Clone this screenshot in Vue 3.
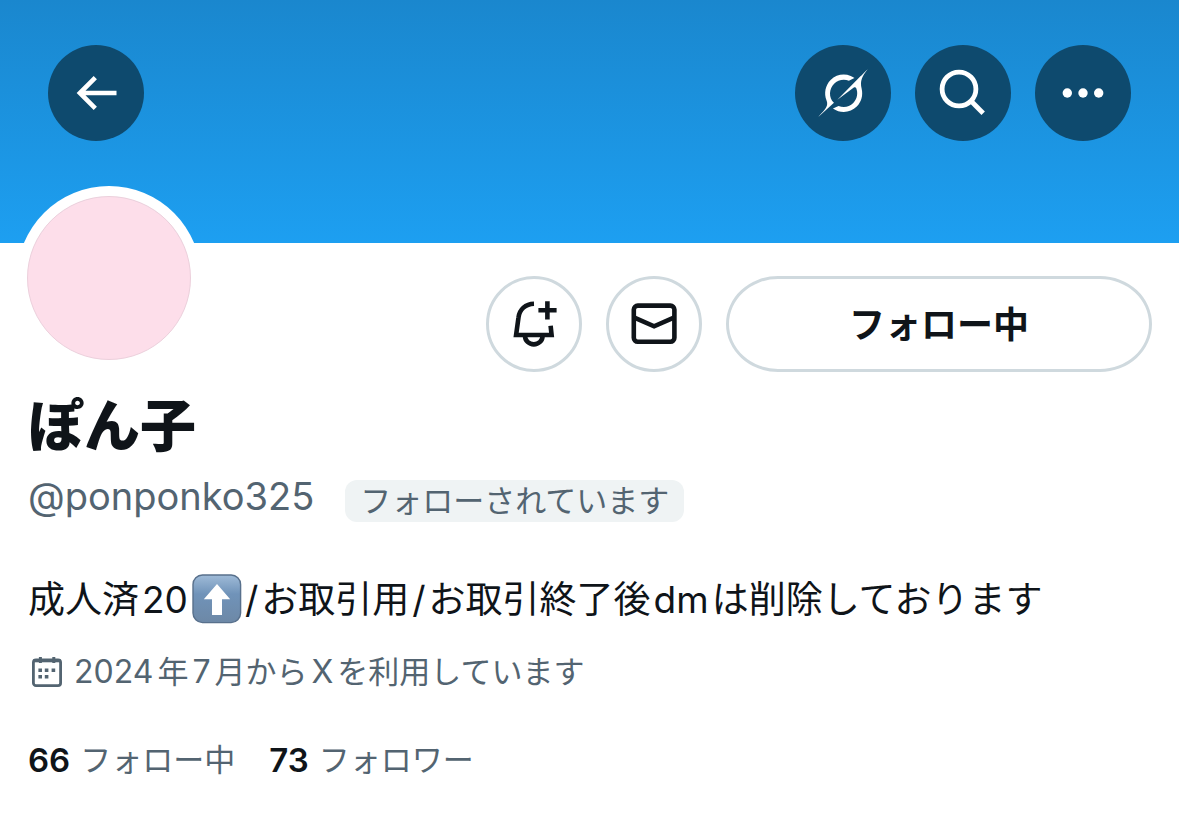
<script setup>
const profile = {
  name: 'ぽん子',
  handle: '@ponponko325',
  following: 66,
  followers: 73,
}
</script>

<template>
  <div class="page">
    <header class="banner">
      <button class="round dark" type="button" aria-label="戻る">
        <svg width="48" height="48" viewBox="0 0 48 48" fill="none" stroke="#fff" stroke-width="4.6">
          <path d="M44.5 24H8M23.3 8.6L7.9 24l15.4 15.4" />
        </svg>
      </button>
      <div class="tools">
        <button class="round dark" type="button" aria-label="Grok">
          <svg width="50" height="48" viewBox="0 0 33 32" fill="#fff">
            <path d="M12.745 20.54l10.97-8.19c.539-.4 1.307-.244 1.564.38 1.349 3.288.746 7.241-1.938 9.955-2.683 2.714-6.417 3.31-9.83 1.954l-3.728 1.745c5.347 3.697 11.84 2.782 15.898-1.324 3.219-3.255 4.216-7.692 3.284-11.693l.008.009c-1.351-5.878.332-8.227 3.782-13.031L33 0l-4.54 4.59v-.014L12.743 20.544m-2.263 1.987c-3.837-3.707-3.175-9.446.1-12.755 2.42-2.449 6.388-3.448 9.852-1.979l3.72-1.737c-.67-.49-1.53-1.017-2.515-1.387-4.455-1.854-9.789-.931-13.41 2.728-3.483 3.523-4.579 8.94-2.697 13.561 1.405 3.454-.899 5.898-3.22 8.364C1.49 30.2.666 31.074 0 32l10.478-9.466" />
          </svg>
        </button>
        <button class="round dark" type="button" aria-label="検索">
          <svg width="48" height="48" viewBox="0 0 48 48" fill="none" stroke="#fff" stroke-width="4.8">
            <circle cx="20" cy="20" r="16.9" />
            <path d="M32 32l12.2 12.2" />
          </svg>
        </button>
        <button class="round dark" type="button" aria-label="もっと見る">
          <svg width="48" height="48" viewBox="0 0 48 48" fill="#fff">
            <circle cx="8.3" cy="24" r="4.7" />
            <circle cx="24" cy="24" r="4.7" />
            <circle cx="39.7" cy="24" r="4.7" />
          </svg>
        </button>
      </div>
    </header>

    <main class="profile">
      <div class="top">
        <div class="avatar" role="img" aria-label="プロフィール画像"></div>
        <div class="actions">
          <button class="round line" type="button" aria-label="通知">
            <svg width="48" height="48" viewBox="0 0 48 48" fill="none" stroke="#0f1419" stroke-width="4.6">
              <path d="M24 3.7C15.6 3.9 9.4 9.4 8.5 17.5L6.1 35h35.5l-1-9.2M15 36a8.8 8.4 0 0 0 17.6 0M37.4 1.2v18.2M28.4 10.3h18.2" />
            </svg>
          </button>
          <button class="round line" type="button" aria-label="メッセージ">
            <svg width="48" height="48" viewBox="0 0 48 48" fill="none" stroke="#0f1419" stroke-width="4.6">
              <rect x="3.8" y="5.6" width="40.6" height="36.2" rx="4" />
              <path d="M3.8 17.4l20.3 8.9 20.3-8.9" />
            </svg>
          </button>
          <button class="follow" type="button">フォロー中</button>
        </div>
      </div>

      <h1>{{ profile.name }}</h1>
      <div class="identity">
        <span class="handle">{{ profile.handle }}</span>
        <span class="badge">フォローされています</span>
      </div>

      <p class="bio">成人済<span class="latin lead">20</span><svg class="emoji" width="50" height="50" viewBox="0 0 50 50" role="img" aria-label="⬆️">
          <defs>
            <linearGradient id="tile" x1="0" y1="0" x2="0" y2="1">
              <stop offset="0" stop-color="#9fbbd8" />
              <stop offset="0.4" stop-color="#7093b9" />
              <stop offset="1" stop-color="#6d88a6" />
            </linearGradient>
          </defs>
          <rect x="1" y="1" width="47.6" height="47.6" rx="9.5" fill="url(#tile)" stroke="#58708c" stroke-width="1.4" />
          <path d="M25 10L38.2 25.2H30V41H20V25.2H11.8z" fill="#fff" />
        </svg><span class="latin">/</span>お取引用<span class="latin">/</span>お取引終了後<span class="latin">dm</span>は削除しております</p>

      <div class="joined">
        <svg width="32" height="32" viewBox="0 0 32 32" fill="none" stroke="#536471">
          <rect x="2.4" y="4" width="27.2" height="25.6" rx="2.6" stroke-width="2.8" />
          <path d="M2.4 4.7h27.2" stroke-width="3.2" />
          <path d="M9.4 1v6M22.8 1v6" stroke-width="3" />
          <path d="M7.4 14.2H11M13.8 14.2h3.6M20.6 14.2h3.6M7.4 20.8H11M13.8 20.8h3.6" stroke-width="3.4" />
        </svg>
        <span>2024<span class="cjk">年</span>7<span class="cjk">月から</span>X<span class="cjk">を利用しています</span></span>
      </div>

      <nav class="stats">
        <a href="#following"><b>{{ profile.following }}</b><span>フォロー中</span></a>
        <a href="#followers"><b>{{ profile.followers }}</b><span>フォロワー</span></a>
      </nav>
    </main>
  </div>
</template>

<style>
body {
  background: #fff;
}
</style>

<style scoped>
.page {
  font-family: Inter, "Noto Sans CJK JP", sans-serif;
  color: #0f1419;
}
button {
  font: inherit;
  color: inherit;
  cursor: pointer;
  box-sizing: border-box;
}
.banner {
  display: flex;
  justify-content: space-between;
  box-sizing: border-box;
  min-height: 243px;
  padding: 45px 48px 0;
  background: linear-gradient(#1a87ce, #1d9ff1);
}
.tools,
.actions {
  display: flex;
  gap: 24px;
}
.round {
  display: flex;
  align-items: center;
  justify-content: center;
  width: 96px;
  height: 96px;
  padding: 0;
  border-radius: 50%;
}
.dark {
  border: 0;
  background: #0e4a6e;
}
.line {
  border: 3px solid #cfd9de;
  background: #fff;
}
.profile {
  padding: 0 28px 40px;
}
.top {
  display: flex;
  justify-content: space-between;
  margin: 0 -1px;
}
.avatar {
  box-sizing: border-box;
  width: 164px;
  height: 164px;
  margin-top: -47px;
  border: 1px solid #ecd0dc;
  border-radius: 50%;
  background: #fddeea;
  box-shadow: 0 0 0 10px #fff;
}
.actions {
  padding-top: 33px;
}
.follow {
  height: 96px;
  padding: 0 120px 4px;
  border: 3px solid #cfd9de;
  border-radius: 52px / 48px;
  background: #fff;
  font-size: 36px;
  font-weight: 700;
}
h1 {
  margin: 20px 0 0;
  font-size: 56px;
  line-height: 68px;
  font-weight: 900;
}
.identity {
  display: flex;
  align-items: flex-start;
  gap: 31px;
  margin-top: 20px;
}
.handle {
  font-size: 38px;
  line-height: 32px;
  color: #536471;
}
.badge {
  padding: 0 15px;
  border-radius: 12px;
  background: #eff3f4;
  font-size: 31px;
  line-height: 42px;
  color: #536471;
}
.bio {
  margin: 51px 0 0;
  font-size: 37px;
  line-height: 54px;
}
.latin {
  margin: 0 3px;
}
.lead {
  margin-right: 4px;
}
.emoji {
  vertical-align: -11px;
}
.joined {
  display: flex;
  align-items: center;
  gap: 11px;
  margin: 25px 0 0 3px;
  font-size: 32px;
  line-height: 40px;
  color: #536471;
}
.cjk {
  margin: 0 4px;
  font-size: 31px;
}
.stats {
  display: flex;
  gap: 34px;
  margin-top: 48px;
  font-size: 31px;
  line-height: 40px;
}
.stats a {
  display: flex;
  gap: 10px;
  color: #536471;
  text-decoration: none;
}
.stats b {
  font-size: 33px;
  font-weight: 600;
  color: #0f1419;
}
</style>
